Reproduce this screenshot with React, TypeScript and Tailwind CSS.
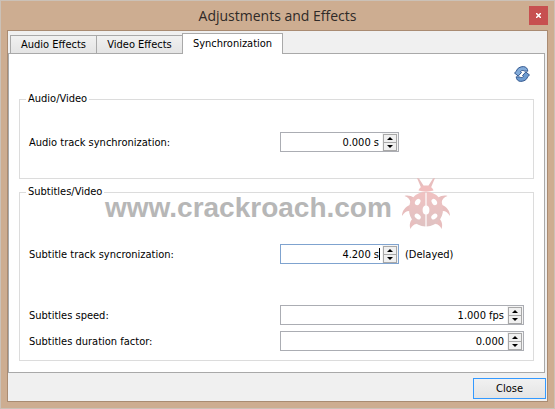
import type { ReactNode } from "react";

type SpinBoxProps = {
  id: string;
  value: string;
  short?: boolean;
  active?: boolean;
};

function StepButton({ label, path }: { label: string; path: string }) {
  return (
    <button
      type="button"
      aria-label={label}
      className="flex h-[9px] w-[14px] items-center justify-center border border-[#a8a8a8] bg-[#f0f0f0]"
    >
      <svg width="6" height="3" viewBox="0 0 6 3">
        <path d={path} fill="#000" />
      </svg>
    </button>
  );
}

function SpinBox({ id, value, short, active }: SpinBoxProps) {
  return (
    <div
      className={`flex h-5 border bg-white ${short ? "w-[119px]" : "w-full"} ${
        active ? "border-[#7fa3cf]" : "border-[#abadb3]"
      }`}
    >
      <input
        id={id}
        defaultValue={value}
        className="min-w-0 flex-1 bg-transparent pt-px text-right outline-none"
      />
      <span className={`my-[3px] w-px ${active ? "bg-black" : ""}`} />
      <div className="ml-[2px] flex flex-col bg-[#f4f4f4] px-px pt-px">
        <StepButton label="Increase" path="M3 0L6 3H0z" />
        <div className="-mt-px flex">
          <StepButton label="Decrease" path="M0 0H6L3 3z" />
        </div>
      </div>
    </div>
  );
}

function Group({ title, children }: { title: string; children: ReactNode }) {
  return (
    <fieldset className="border border-[#dcdcdc] pr-[9px] pl-[9px]">
      <legend className="-ml-[3px] px-[2px] leading-[14px]">{title}</legend>
      {children}
    </fieldset>
  );
}

function Row({ id, label, children }: { id: string; label: string; children: ReactNode }) {
  return (
    <div className="grid grid-cols-2 items-center gap-[7px]">
      <label htmlFor={id} className="pt-px">
        {label}
      </label>
      <div className="flex items-center gap-[6px]">{children}</div>
    </div>
  );
}

function RefreshIcon() {
  return (
    <svg width="16" height="16" viewBox="0 0 16 16" fill="#82abd9" stroke="#34588f" strokeLinejoin="round">
      <path d="M2.200 5.500C3 2 6.500 .5 9.500 .6C12 .8 13.700 2.500 13.800 5.200L10.300 5C9 4 7.300 4.400 6.400 5.700L7.500 6.500L4.200 10L.5 7z" />
      <path fill="#6d9bd0" d="M13.800 10.500C13 14 9.500 15.500 6.500 15.400C4 15.200 2.300 13.500 2.200 10.800L5.700 11C7 12 8.700 11.600 9.600 10.300L8.500 9.500L11.800 6L15.500 9z" />
    </svg>
  );
}

function Bug() {
  return (
    <svg width="48" height="52" viewBox="0 0 48 52">
      <defs>
        <linearGradient id="shell" x1="0" y1="0" x2="0" y2="1">
          <stop offset="0" stopColor="#f0bcbc" />
          <stop offset="1" stopColor="#dcbcbc" />
        </linearGradient>
      </defs>
      <g fill="#e6b8b8">
        <path d="M15 0L17 .5L22.500 9L19 9.500zM33 0L31 .5L25.500 9L29 9.500z" />
        <path d="M2.500 18C5 17 9 17.500 12 20L8.500 25C8 21 6 19 2.500 18zM45.500 18C43 17 39 17.500 36 20L39.500 25C40 21 42 19 45.500 18z" />
        <path d="M0 38C0 33 3 29 8 27L8 33C5 32.500 2 34.500 0 38zM48 38C48 33 45 29 40 27L40 33C43 32.500 46 34.500 48 38z" />
        <path d="M8.500 51C7 47 8 43 11 40L15 46C12 46 9.500 48 8.500 51zM39.500 51C41 47 40 43 37 40L33 46C36 46 38.500 48 39.500 51z" />
      </g>
      <path fill="#f0b8b8" d="M16.500 12.500C18 9 20 7.500 24 7.500S30 9 31.500 12.500C27 14 21 14 16.500 12.500z" />
      <path fill="url(#shell)" d="M23.400 14V48.500C13 48 7 40 7 31.500C7 22 13 14 23.400 14zM24.600 14V48.500C35 48 41 40 41 31.500C41 22 35 14 24.600 14z" />
      <g fill="#fff">
        <ellipse cx="24" cy="32" rx="3.400" ry="4.600" />
        <ellipse cx="15.700" cy="24" rx="2.400" ry="3.400" transform="rotate(35 15.700 24)" />
        <ellipse cx="32.300" cy="24" rx="2.400" ry="3.400" transform="rotate(-35 32.300 24)" />
        <ellipse cx="15.700" cy="38.500" rx="2.400" ry="3.400" transform="rotate(-50 15.700 38.500)" />
        <ellipse cx="32.300" cy="38.500" rx="2.400" ry="3.400" transform="rotate(50 32.300 38.500)" />
      </g>
    </svg>
  );
}

const idleTab = "h-[19px] border border-[#a9a9a9] bg-linear-to-b from-[#f1f1f1] to-[#e4e4e4]";

export default function App() {
  return (
    <main className="flex min-h-screen flex-col border border-[#cbc1b7] bg-[#cdad91] px-[6px] pb-[6px] font-['DejaVu_Sans_Condensed','DejaVu_Sans',sans-serif] text-[11px] leading-4 text-black">
      <header className="relative flex h-[29px] items-center justify-center">
        <h1 className="font-['Open_Sans',sans-serif] text-[14px] text-[#2f2a28]">
          Adjustments and Effects
        </h1>
        <button
          type="button"
          aria-label="Close window"
          className="absolute top-[5px] right-0 flex h-[19px] w-[19px] items-center justify-center bg-[#c75050]"
        >
          <svg width="5" height="5" viewBox="0 0 5 5" stroke="#fff" strokeWidth="1.500">
            <path d="M0 0L5 5M5 0L0 5" />
          </svg>
        </button>
      </header>

      <div className="flex flex-1 flex-col border border-[#a98b72] bg-[#f0f0f0]">
        <div role="tablist" className="flex items-end pt-[2px] pl-[2px]">
          <button type="button" role="tab" className={`w-[87px] ${idleTab}`}>
            Audio Effects
          </button>
          <button type="button" role="tab" className={`-ml-px w-[87px] ${idleTab}`}>
            Video Effects
          </button>
          <button
            type="button"
            role="tab"
            aria-selected="true"
            className="relative z-10 -ml-px h-[21px] w-[101px] border border-b-0 border-[#a9a9a9] bg-white"
          >
            Synchronization
          </button>
        </div>

        <section className="relative -mt-px mr-[2px] flex-1 border border-[#a9a9a9] bg-white px-[10px] pt-3">
          <div className="flex h-[26px] items-start justify-end pr-1">
            <button type="button" aria-label="Reset">
              <RefreshIcon />
            </button>
          </div>

          <Group title="Audio/Video">
            <div className="pt-[26px] pb-[26px]">
              <Row id="audio-sync" label="Audio track synchronization:">
                <SpinBox id="audio-sync" value="0.000 s" short />
              </Row>
            </div>
          </Group>

          <div className="mt-[6px]">
            <Group title="Subtitles/Video">
              <div className="flex flex-col gap-[6px] pt-[45px] pb-[9px]">
                <Row id="sub-sync" label="Subtitle track syncronization:">
                  <SpinBox id="sub-sync" value="4.200 s" short active />
                  <span className="pt-px">(Delayed)</span>
                </Row>
                <div className="pt-[35px]">
                  <Row id="sub-speed" label="Subtitles speed:">
                    <SpinBox id="sub-speed" value="1.000 fps" />
                  </Row>
                </div>
                <Row id="sub-duration" label="Subtitles duration factor:">
                  <SpinBox id="sub-duration" value="0.000" />
                </Row>
              </div>
            </Group>
          </div>

          <div className="pointer-events-none absolute top-[124px] left-24 flex items-center gap-[10px] opacity-90">
            <span className="pt-2 font-['Liberation_Sans',Arial,sans-serif] text-[28px] leading-8 font-bold text-[#b0b0b0]">
              www.crackroach.com
            </span>
            <Bug />
          </div>
        </section>

        <footer className="flex justify-end pt-[5px] pr-px pb-[2px]">
          <button
            type="button"
            className="h-[21px] w-[73px] border border-[#3399ff] bg-linear-to-b from-[#f1f1f1] to-[#e4e4e4]"
          >
            Close
          </button>
        </footer>
      </div>
    </main>
  );
}
